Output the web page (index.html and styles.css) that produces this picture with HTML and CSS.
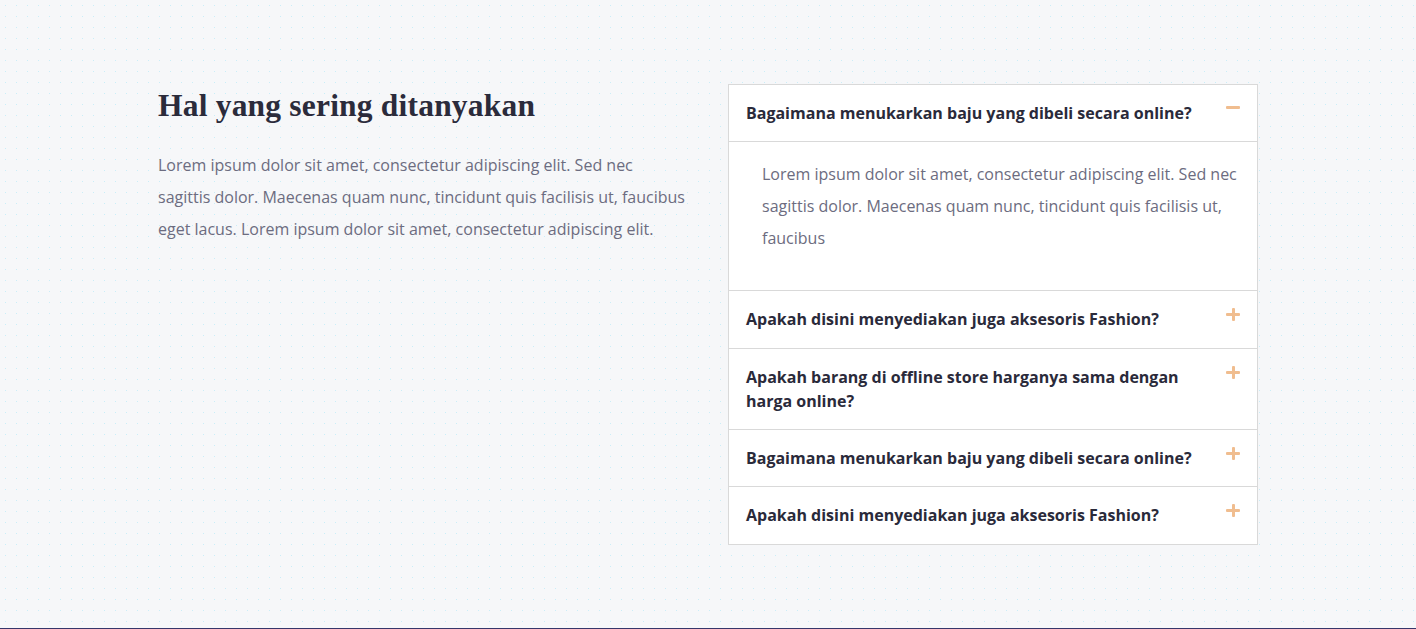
FILE: index.html
```html
<!DOCTYPE html>
<html lang="id">
<head>
<meta charset="utf-8">
<title>FAQ</title>
<link rel="stylesheet" href="styles.css">
</head>
<body>
<section class="faq">
  <div class="container">
    <div class="intro">
      <h2 class="title">Hal yang sering ditanyakan</h2>
      <p class="lead">Lorem ipsum dolor sit amet, consectetur adipiscing elit. Sed nec sagittis dolor. Maecenas quam nunc, tincidunt quis facilisis ut, faucibus eget lacus. Lorem ipsum dolor sit amet, consectetur adipiscing elit.</p>
    </div>
    <div class="accordion">
      <div class="item open">
        <div class="head">
          <span class="q">Bagaimana menukarkan baju yang dibeli secara online?</span>
          <span class="icon minus"></span>
        </div>
        <div class="body">
          <p>Lorem ipsum dolor sit amet, consectetur adipiscing elit. Sed nec sagittis dolor. Maecenas quam nunc, tincidunt quis facilisis ut, faucibus</p>
        </div>
      </div>
      <div class="item">
        <div class="head">
          <span class="q">Apakah disini menyediakan juga aksesoris Fashion?</span>
          <span class="icon plus"></span>
        </div>
      </div>
      <div class="item">
        <div class="head">
          <span class="q">Apakah barang di offline store harganya sama dengan harga online?</span>
          <span class="icon plus"></span>
        </div>
      </div>
      <div class="item">
        <div class="head">
          <span class="q">Bagaimana menukarkan baju yang dibeli secara online?</span>
          <span class="icon plus"></span>
        </div>
      </div>
      <div class="item">
        <div class="head">
          <span class="q">Apakah disini menyediakan juga aksesoris Fashion?</span>
          <span class="icon plus"></span>
        </div>
      </div>
    </div>
  </div>
</section>
<footer class="footer"></footer>
</body>
</html>
```
FILE: styles.css
```css
* { box-sizing: border-box; }
html, body { margin: 0; padding: 0; }
body {
  background: #f6f7f9;
  font-family: "Open Sans", "Liberation Sans", sans-serif;
  overflow: hidden;
}
.faq {
  height: 628px;
  padding-top: 84px;
  background-color: #f6f7f9;
  background-image: radial-gradient(circle, rgba(150, 225, 245, 0.45) 0.7px, transparent 1px);
  background-size: 11px 11px;
}
.container {
  width: 1100px;
  margin: 0 auto;
  display: flex;
  gap: 40px;
  align-items: flex-start;
}
.intro { width: 530px; }
.title {
  margin: 2px 0 0;
  font-family: "Liberation Serif", "DejaVu Serif", serif;
  font-weight: 700;
  font-size: 31.5px;
  line-height: 40px;
  color: #2b2b3b;
  letter-spacing: 0.2px;
}
.lead {
  margin: 23px 0 0;
  font-size: 16px;
  line-height: 32px;
  color: #6c6c80;
}
.accordion {
  width: 530px;
  border: 1px solid #d9d9d9;
  background: #fff;
}
.item + .item { border-top: 1px solid #d9d9d9; }
.head {
  display: flex;
  justify-content: space-between;
  align-items: flex-start;
  gap: 20px;
  padding: 16px 16px 16px 17px;
}
.q {
  font-size: 16px;
  font-weight: 700;
  line-height: 24.3px;
  color: #2a2a3a;
  max-width: 450px;
}
.icon {
  position: relative;
  flex: none;
  width: 14px;
  height: 16px;
  margin-right: 1px;
}
.icon::before, .icon::after {
  content: "";
  position: absolute;
  background: #f0bd8f;
  border-radius: 1px;
}
.icon::before {
  left: 0; right: 0;
  top: 6px; height: 3px;
}
.plus::after {
  top: 1px; bottom: 2px;
  left: 5.5px; width: 3px;
}
.minus::before { top: 5px; }
.body {
  border-top: 1px solid #d9d9d9;
  padding: 16px 18px 36px 33px;
}
.body p {
  margin: 0;
  font-size: 16px;
  line-height: 32px;
  color: #6c6c80;
}
.footer {
  height: 20px;
  background: #36366a;
}
```
